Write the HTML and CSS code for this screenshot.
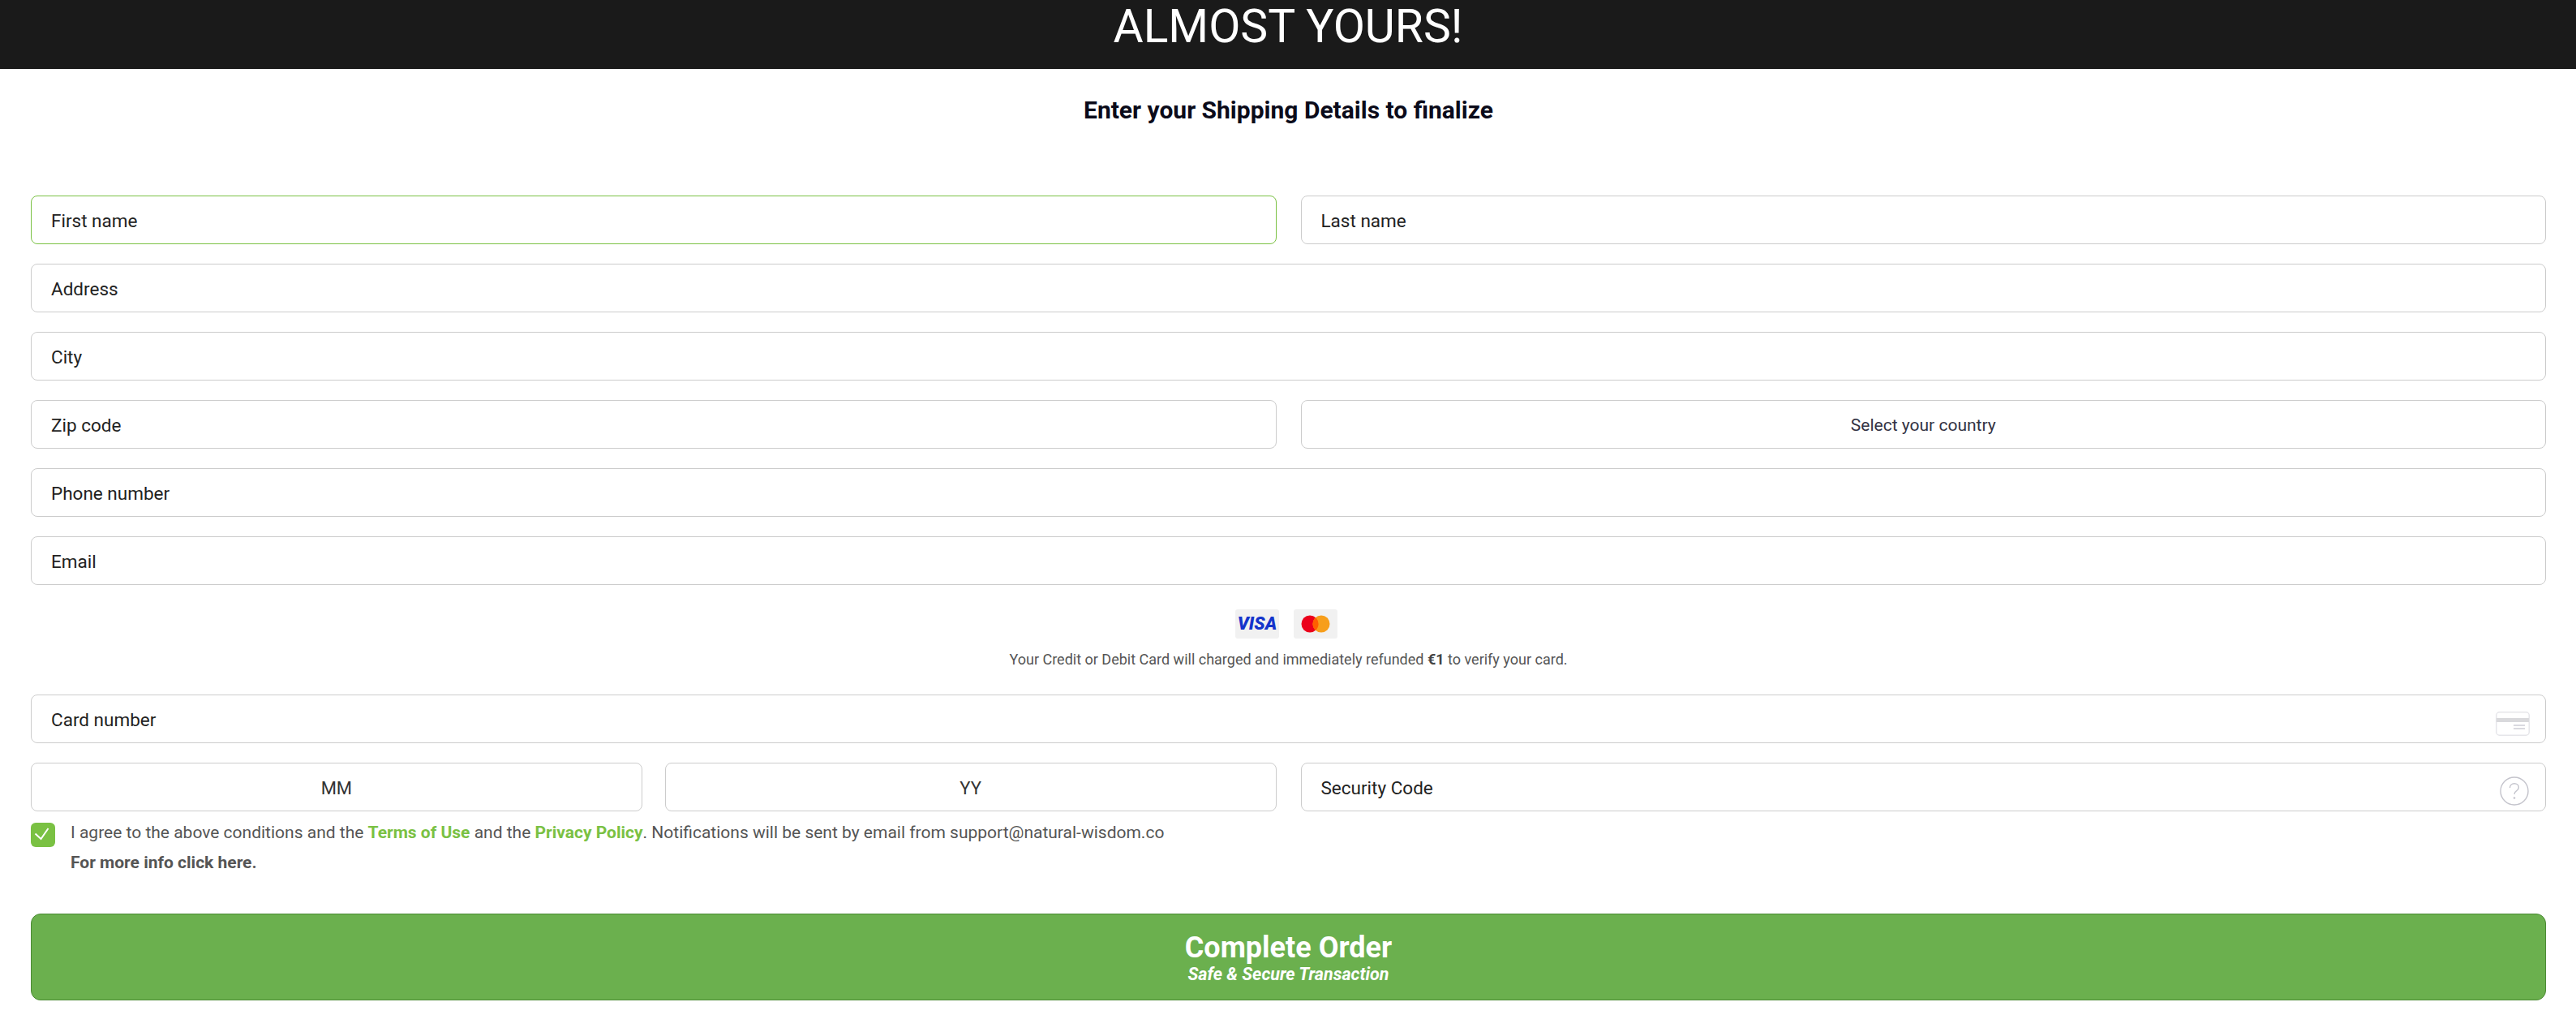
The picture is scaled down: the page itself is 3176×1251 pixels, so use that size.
FILE: index.html
```html
<!DOCTYPE html>
<html lang="en">
<head>
<meta charset="utf-8">
<title>Almost Yours</title>
<link rel="stylesheet" href="styles.css">
</head>
<body>
<header class="banner"><h1 class="banner-title">ALMOST YOURS!</h1></header>
<main class="page">
  <h2 class="subtitle">Enter your Shipping Details to finalize</h2>
  <form class="form">
    <div class="row two">
      <input class="field focus" placeholder="First name">
      <input class="field" placeholder="Last name">
    </div>
    <input class="field" placeholder="Address">
    <input class="field" placeholder="City">
    <div class="row two">
      <input class="field" placeholder="Zip code">
      <div class="field select">Select your country</div>
    </div>
    <input class="field" placeholder="Phone number">
    <input class="field" placeholder="Email">

    <div class="cards">
      <div class="badges">
        <span class="badge"><span class="visa">VISA</span></span>
        <span class="badge"><svg width="36" height="22" viewBox="0 0 36 22"><circle cx="11" cy="11" r="10.5" fill="#eb001b"/><circle cx="25" cy="11" r="10.5" fill="#f79e1b"/><path d="M18 3.100a10.500 10.500 0 0 1 0 15.800a10.500 10.500 0 0 1 0-15.800z" fill="#ff5f00"/></svg></span>
      </div>
      <p class="notice">Your Credit or Debit Card will charged and immediately refunded <b>€1</b> to verify your card.</p>
    </div>

    <div class="with-icon">
      <input class="field" placeholder="Card number">
      <svg class="field-icon card-icon" width="42" height="30" viewBox="0 0 42 30"><rect x="0.75" y="0.75" width="40.5" height="28.5" rx="4" fill="#fff" stroke="#e6e6ea" stroke-width="1.5"/><rect x="1" y="8" width="40" height="5" fill="#d9d9dc"/><rect x="22" y="16" width="14" height="2" fill="#d9d9e0"/><rect x="22" y="20" width="14" height="2" fill="#d9d9e0"/></svg>
    </div>
    <div class="row two">
      <div class="row two">
        <input class="field center" placeholder="MM">
        <input class="field center" placeholder="YY">
      </div>
      <div class="with-icon">
        <input class="field" placeholder="Security Code">
        <svg class="field-icon help-icon" width="36" height="36" viewBox="0 0 36 36"><circle cx="18" cy="18" r="17" fill="#fff" stroke="#c4c4cc" stroke-width="1.4"/><path d="M12.500 14c0-3.200 2.400-5.200 5.500-5.200s5.400 2 5.400 4.700c0 2-1.200 3.100-2.700 4.200-1.600 1.100-2.700 2.100-2.700 4.300" fill="none" stroke="#c4c4cc" stroke-width="1.4"/><circle cx="18" cy="26.500" r="1.300" fill="#c4c4cc"/></svg>
      </div>
    </div>

    <div class="terms">
      <span class="check"><svg width="30" height="30" viewBox="0 0 30 30"><path d="M5.500 13.500L12.500 20L21.500 7" fill="none" stroke="#fff" stroke-width="2"/></svg></span>
      <div class="terms-text">
        <p class="terms-line">I agree to the above conditions and the <a class="link">Terms of Use</a> and the <a class="link">Privacy Policy</a>. Notifications will be sent by email from support@natural-wisdom.co</p>
        <p class="terms-more">For more info click here.</p>
      </div>
    </div>

    <button class="submit" type="button">
      <span class="submit-main">Complete Order</span>
      <span class="submit-sub">Safe &amp; Secure Transaction</span>
    </button>
  </form>
</main>
</body>
</html>
```
FILE: styles.css
```css
* { box-sizing: border-box; }
html, body { margin: 0; padding: 0; }
body { font-family: Roboto, "Liberation Sans", sans-serif; background: #fff; color: #222; }

.banner { height: 85px; background: #1a1a1a; text-align: center; }
.banner-title { margin: 0; padding-top: 1px; font-size: 57px; font-weight: 400; line-height: 64px; color: #fff; }

.page { padding: 0 37px 0 38px; }
.subtitle { margin: 0; padding-top: 33px; height: 156px; text-align: center; font-size: 30px; line-height: 35px; font-weight: 700; color: #0b0b1a; font-variant-ligatures: common-ligatures; }

.form { display: flex; flex-direction: column; gap: 24px; }
.row { display: grid; gap: 30px; }
.row.two { grid-template-columns: 1fr 1fr; }
.row .row.two { gap: 28px; }

.field { display: block; width: 100%; height: 60px; padding: 2px 24px 0; border: 1px solid #ccc; border-radius: 8px; background: #fff; font: 400 22.5px Roboto, sans-serif; color: #222; outline: none; }
.field::placeholder { color: #222; opacity: 1; }
.field.focus { border-color: #7ac143; }
.field.center { text-align: center; }
.field.center::placeholder { color: #333; font-size: 22px; }
.select { display: flex; align-items: center; justify-content: center; font-size: 21px; color: #334; }

.cards { display: flex; flex-direction: column; align-items: center; margin-top: 6px; margin-bottom: 9px; }
.badges { display: flex; gap: 18px; margin-right: 5px; }
.badge { display: flex; align-items: center; justify-content: center; width: 54px; height: 36px; border-radius: 3px; background: #f1f1f1; }
.visa { font-size: 22px; line-height: 22px; font-weight: 900; font-style: italic; color: #1434cb; }
.notice { margin: 15px 0 0; font-size: 18px; line-height: 21px; color: #555; }
.notice b { color: #444; }

.with-icon { position: relative; }
.field-icon { position: absolute; right: 20px; }
.card-icon { top: 21px; }
.help-icon { top: 17px; right: 21px; }

.terms { display: flex; gap: 19px; margin-top: -10px; }
.check { display: flex; flex: none; width: 30px; height: 30px; border-radius: 6px; background: #7ac143; }
.terms-text { font-size: 21px; color: #555; }
.terms-line { margin: 0; line-height: 24px; }
.terms-more { margin: 13px 0 0; line-height: 24px; font-weight: 700; }
.link { font-weight: 700; color: #7ac143; }

.submit { display: flex; flex-direction: column; align-items: center; justify-content: center; height: 107px; margin-top: 27px; border: 1px solid #4a8a33; border-radius: 12px; background: #6bb04e; color: #fff; font-family: Roboto, sans-serif; }
.submit-main { font-size: 36px; line-height: 42px; font-weight: 700; }
.submit-sub { font-size: 21.5px; line-height: 24px; font-weight: 700; font-style: italic; }
```
